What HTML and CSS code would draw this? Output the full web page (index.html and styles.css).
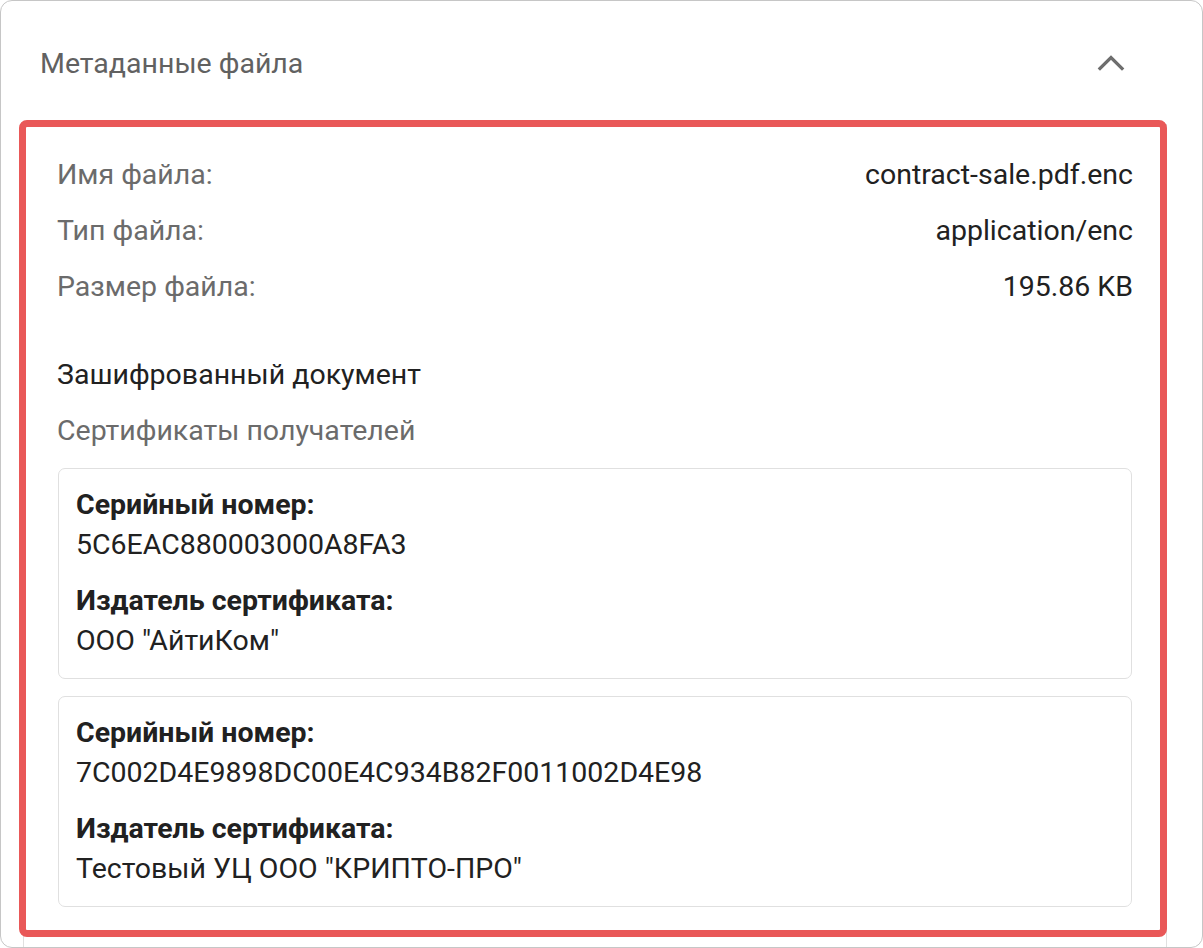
FILE: index.html
```html
<!DOCTYPE html>
<html lang="ru">
<head>
<meta charset="utf-8">
<title>Метаданные файла</title>
<link rel="stylesheet" href="styles.css">
</head>
<body>
<div class="card">
  <div class="header">
    <div class="title">Метаданные файла</div>
    <svg class="chevron" width="28" height="17" viewBox="0 0 28 17" aria-hidden="true">
      <polyline points="3,14.5 14,3.5 25,14.5" fill="none" stroke="#6e6e6e" stroke-width="3.3" stroke-linecap="square"/>
    </svg>
  </div>
  <div class="panel">
    <div class="row"><span class="key">Имя файла:</span><span class="val">contract-sale.pdf.enc</span></div>
    <div class="row"><span class="key">Тип файла:</span><span class="val">application/enc</span></div>
    <div class="row"><span class="key">Размер файла:</span><span class="val">195.86 KB</span></div>
    <div class="section">Зашифрованный документ</div>
    <div class="subsection">Сертификаты получателей</div>
    <div class="cert">
      <div class="clabel">Серийный номер:</div>
      <div class="cvalue">5C6EAC880003000A8FA3</div>
      <div class="clabel second">Издатель сертификата:</div>
      <div class="cvalue">ООО "АйтиКом"</div>
    </div>
    <div class="cert">
      <div class="clabel">Серийный номер:</div>
      <div class="cvalue">7C002D4E9898DC00E4C934B82F0011002D4E98</div>
      <div class="clabel second">Издатель сертификата:</div>
      <div class="cvalue">Тестовый УЦ ООО "КРИПТО-ПРО"</div>
    </div>
  </div>
  <div class="highlight"></div>
</div>
</body>
</html>
```
FILE: styles.css
```css
html, body {
  margin: 0;
  padding: 0;
  background: #ffffff;
}
body {
  font-family: Roboto, "Noto Sans", "Liberation Sans", sans-serif;
  font-size: 28.5px;
  color: #212121;
}
.card {
  position: relative;
  box-sizing: border-box;
  width: 1203px;
  height: 948px;
  border: 1px solid #c6c6c6;
  border-radius: 12px;
  overflow: hidden;
  background: #fff;
}
.header {
  height: 123px;
  box-sizing: border-box;
  padding: 0 77px 0 39px;
  display: flex;
  align-items: center;
  justify-content: space-between;
}
.title {
  font-size: 28.5px;
  color: #616161;
  line-height: 1;
  margin-top: 4px;
}
.chevron {
  display: block;
  margin-top: -1px;
}
.panel {
  margin: 0 35px 0 22px;
  border: 1px solid #e0e0e0;
  border-bottom: none;
  padding: 22px 33px 0 34px;
  min-height: 900px;
}
.row {
  display: flex;
  justify-content: space-between;
  line-height: 56px;
  padding-left: 0;
}
.key {
  color: #6b6b6b;
  margin-left: -1px;
}
.val {
  color: #212121;
}
.section {
  margin-top: 32px;
  line-height: 56px;
  color: #212121;
  margin-left: -1px;
}
.subsection {
  line-height: 56px;
  color: #6b6b6b;
  margin-left: -1px;
}
.cert {
  margin-top: 9px;
  margin-right: 1px;
  border: 1px solid #e0e0e0;
  border-radius: 7px;
  padding: 16px 17px 17px;
}
.cert + .cert {
  margin-top: 17px;
}
.clabel {
  font-weight: 700;
  line-height: 40px;
  color: #212121;
}
.clabel.second {
  margin-top: 16px;
}
.cvalue {
  line-height: 40px;
  color: #212121;
}
.highlight {
  position: absolute;
  left: 18px;
  top: 119px;
  width: 1148px;
  height: 817px;
  box-sizing: border-box;
  border: 7px solid #e95858;
  border-radius: 8px;
  pointer-events: none;
}
```
